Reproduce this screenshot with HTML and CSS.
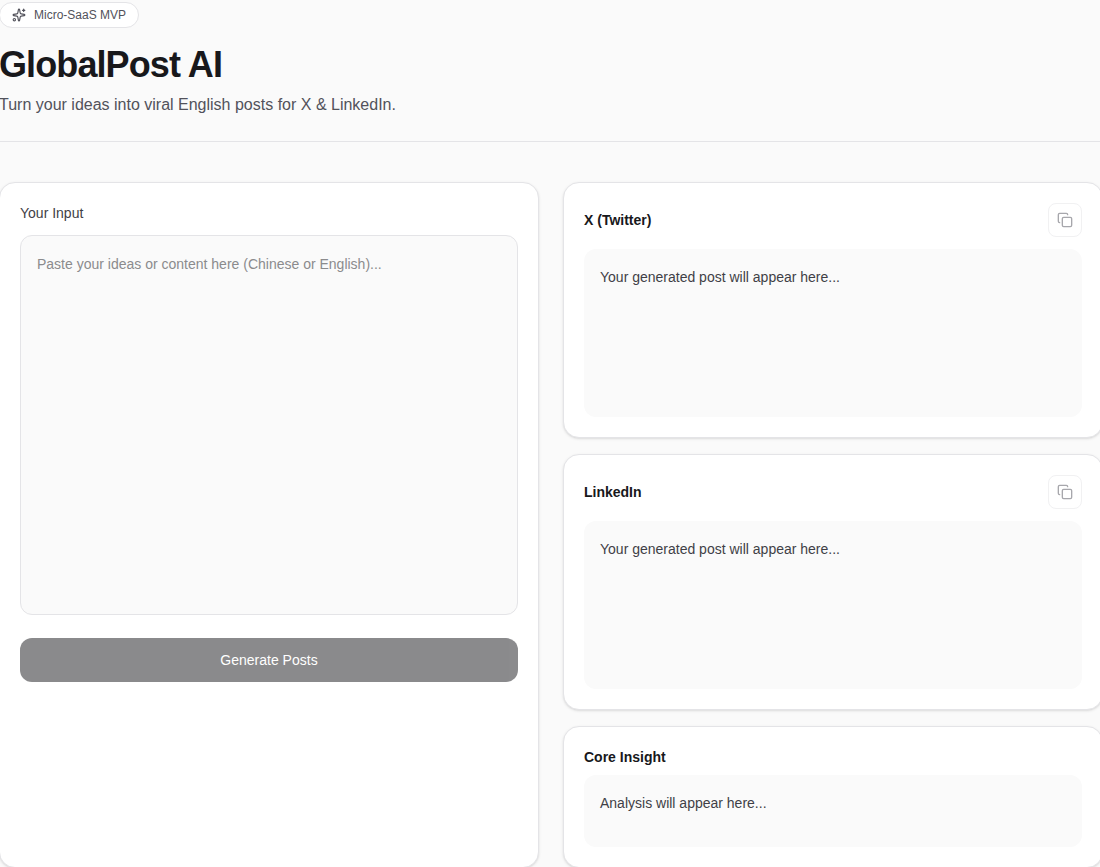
FILE: index.html
```
<!DOCTYPE html>
<html lang="en">
<head>
  <meta charset="UTF-8">
  <title>GlobalPost AI</title>
  <link rel="stylesheet" href="styles.css">
</head>
<body>
  <div class="container">
    <header class="header">
      <div class="badge">
        <svg class="badge-icon" viewBox="0 0 24 24">
          <path d="M11.017 2.814a1 1 0 0 1 1.966 0l1.051 5.558a2 2 0 0 0 1.594 1.594l5.558 1.051a1 1 0 0 1 0 1.966l-5.558 1.051a2 2 0 0 0-1.594 1.594l-1.051 5.558a1 1 0 0 1-1.966 0l-1.051-5.558a2 2 0 0 0-1.594-1.594l-5.558-1.051a1 1 0 0 1 0-1.966l5.558-1.051a2 2 0 0 0 1.594-1.594z"/>
          <path d="M20 2v4"/>
          <path d="M22 4h-4"/>
          <circle cx="4" cy="20" r="2"/>
        </svg>
        <span>Micro-SaaS MVP</span>
      </div>
      <h1 class="title">GlobalPost AI</h1>
      <p class="subtitle">Turn your ideas into viral English posts for X &amp; LinkedIn.</p>
    </header>

    <main class="layout">
      <section class="card">
        <label class="input-label" for="ideaInput">Your Input</label>
        <textarea class="idea-input" id="ideaInput" placeholder="Paste your ideas or content here (Chinese or English)..."></textarea>
        <button type="button" class="generate-button" disabled>Generate Posts</button>
      </section>

      <div class="results">
        <section class="card">
          <div class="card-header">
            <h2 class="card-title">X (Twitter)</h2>
            <button type="button" class="copy-button" aria-label="Copy X post" disabled>
              <svg class="copy-icon" viewBox="0 0 24 24">
                <rect width="14" height="14" x="8" y="8" rx="2" ry="2"/>
                <path d="M4 16c-1.1 0-2-.9-2-2V4c0-1.1.9-2 2-2h10c1.1 0 2 .9 2 2"/>
              </svg>
            </button>
          </div>
          <div class="output post-output">Your generated post will appear here...</div>
        </section>

        <section class="card">
          <div class="card-header">
            <h2 class="card-title">LinkedIn</h2>
            <button type="button" class="copy-button" aria-label="Copy LinkedIn post" disabled>
              <svg class="copy-icon" viewBox="0 0 24 24">
                <rect width="14" height="14" x="8" y="8" rx="2" ry="2"/>
                <path d="M4 16c-1.1 0-2-.9-2-2V4c0-1.1.9-2 2-2h10c1.1 0 2 .9 2 2"/>
              </svg>
            </button>
          </div>
          <div class="output post-output">Your generated post will appear here...</div>
        </section>

        <section class="card">
          <h2 class="card-title">Core Insight</h2>
          <div class="output insight-output">Analysis will appear here...</div>
        </section>
      </div>
    </main>
  </div>
</body>
</html>
```
FILE: styles.css
```
* {
  box-sizing: border-box;
}

body {
  margin: 0;
  background: #fafafa;
  color: #18181b;
  font-family: "Liberation Sans", Arial, sans-serif;
  font-size: 14px;
  line-height: 20px;
  overflow: hidden;
}

.container {
  width: 1104px;
  margin-left: -1px;
  padding-top: 2px;
}

.header {
  padding-bottom: 24px;
  border-bottom: 1px solid #e4e4e7;
}

.badge {
  display: flex;
  align-items: center;
  gap: 8px;
  width: fit-content;
  padding: 4px 12px;
  border: 1px solid #e4e4e7;
  border-radius: 999px;
  background: white;
  color: #52525b;
  font-size: 12px;
  line-height: 16px;
}

.badge-icon {
  width: 14px;
  height: 14px;
  fill: none;
  stroke: currentColor;
  stroke-width: 2;
  stroke-linecap: round;
  stroke-linejoin: round;
}

.title {
  margin: 17px 0 0;
  font-size: 36px;
  line-height: 40px;
  font-weight: bold;
  letter-spacing: -0.025em;
}

.subtitle {
  margin: 8px 0 0;
  color: #52525b;
  font-size: 16px;
  line-height: 24px;
}

.layout {
  display: grid;
  grid-template-columns: 1fr 1fr;
  gap: 24px;
  margin-top: 40px;
}

.results {
  display: flex;
  flex-direction: column;
  gap: 16px;
}

.card {
  padding: 20px;
  border: 1px solid #e4e4e7;
  border-radius: 16px;
  background: white;
  box-shadow: 0 1px 3px rgba(0,0,0,0.1), 0 1px 2px -1px rgba(0,0,0,0.1);
}

.input-label {
  display: block;
  color: #3f3f46;
}

.idea-input {
  display: block;
  width: 100%;
  height: 380px;
  margin-top: 12px;
  padding: 16px;
  border: 1px solid #e4e4e7;
  border-radius: 12px;
  background: #fafafa;
  color: #18181b;
  font: inherit;
  line-height: 24px;
  resize: none;
  outline: none;
}

.idea-input::placeholder {
  color: #8b8b8d;
}

.generate-button {
  width: 100%;
  height: 44px;
  margin-top: 23px;
  border: none;
  border-radius: 12px;
  background: #18181b;
  color: white;
  font: inherit;
}

.generate-button:disabled {
  opacity: 0.5;
}

.card-header {
  display: flex;
  justify-content: space-between;
  align-items: center;
  margin-bottom: 12px;
}

.card-title {
  margin: 0;
  font-size: 14px;
  line-height: 20px;
  font-weight: bold;
}

.copy-button {
  display: flex;
  align-items: center;
  justify-content: center;
  width: 34px;
  height: 34px;
  padding: 0;
  border: 1px solid #e4e4e7;
  border-radius: 8px;
  background: white;
  color: #52525b;
}

.copy-button:disabled {
  opacity: 0.5;
}

.copy-icon {
  width: 16px;
  height: 16px;
  fill: none;
  stroke: currentColor;
  stroke-width: 2;
  stroke-linecap: round;
  stroke-linejoin: round;
}

.output {
  padding: 16px;
  border-radius: 12px;
  background: #fafafa;
  color: #3f3f46;
  line-height: 24px;
}

.post-output {
  height: 168px;
}

.insight-output {
  height: 72px;
  margin-top: 8px;
}
```
